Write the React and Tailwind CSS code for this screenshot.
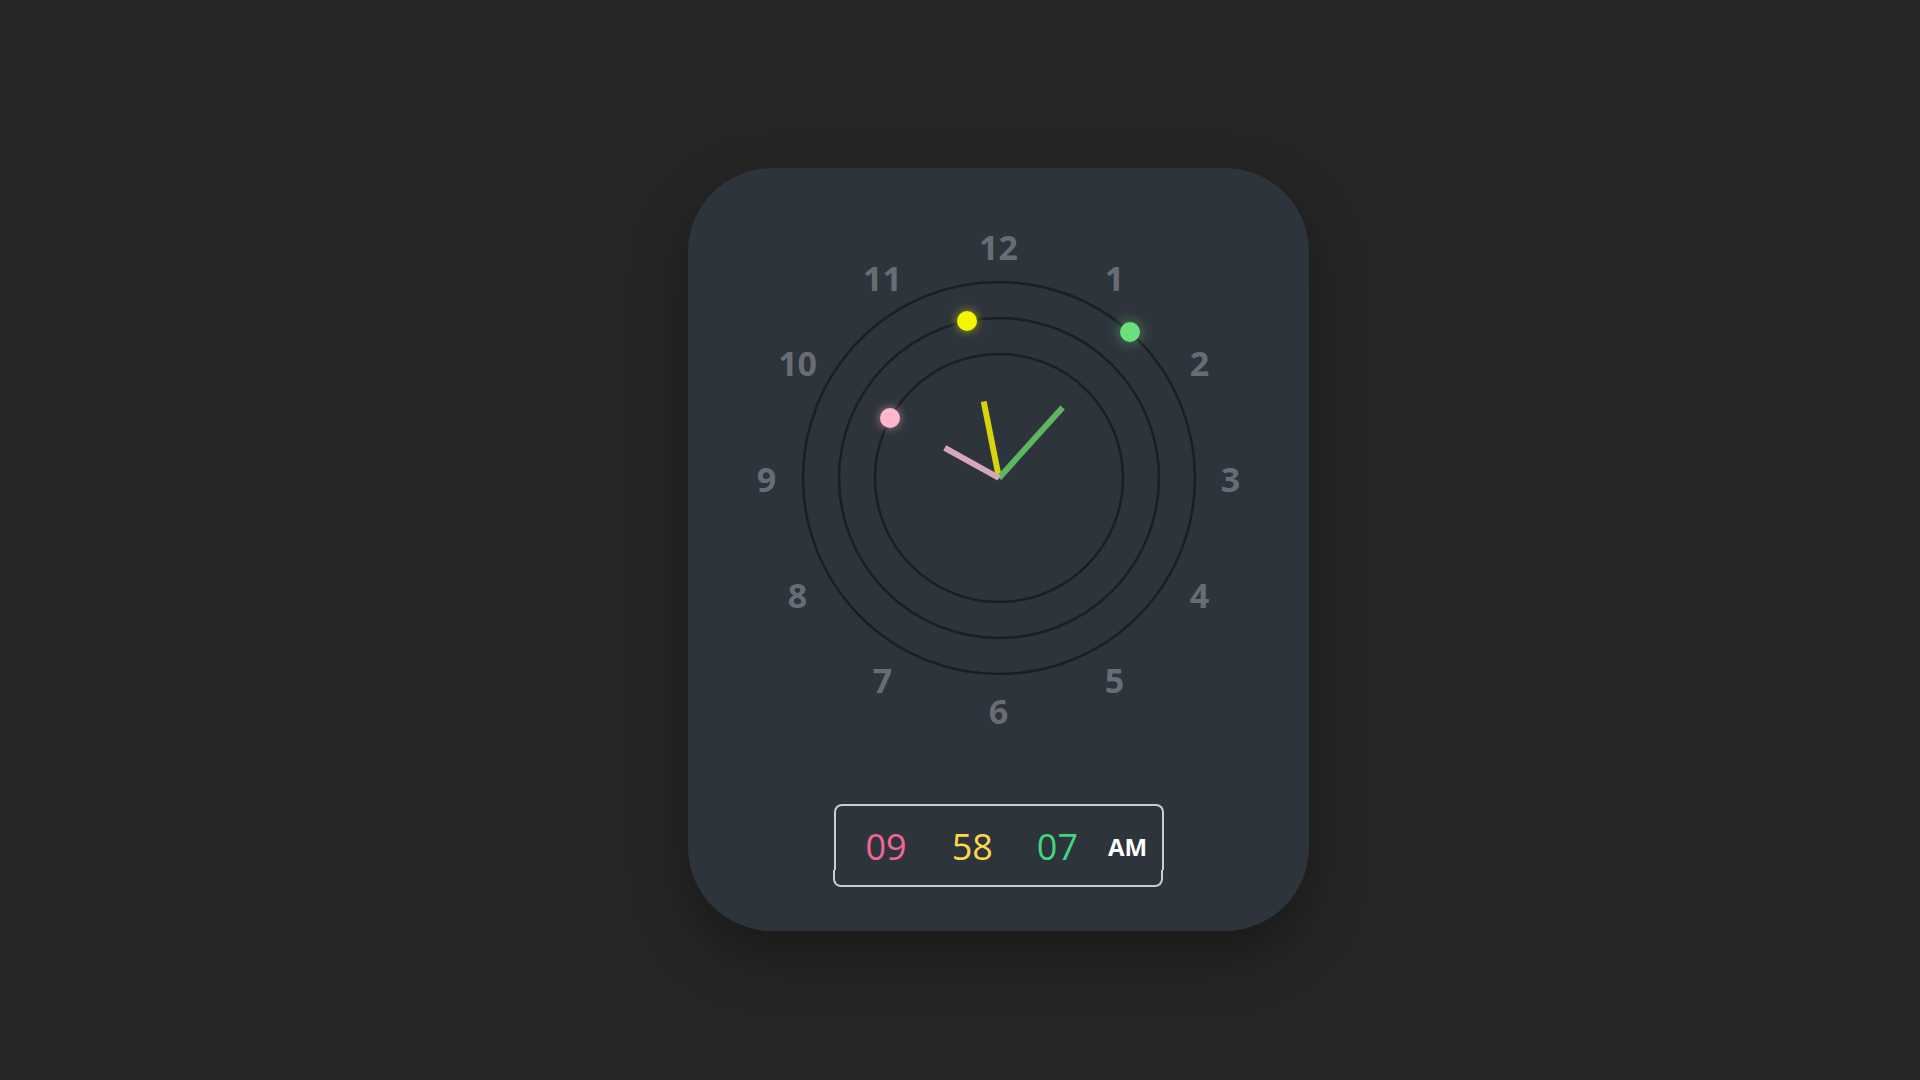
import React from 'react';

const font = { fontFamily: '"Open Sans", "Noto Sans", sans-serif' };

// dial numbers, placed round the centre at radius 232
const numbers = [12, 1, 2, 3, 4, 5, 6, 7, 8, 9, 10, 11];

const polar = (deg, r) => {
  const a = (deg * Math.PI) / 180;
  return { x: 250 + r * Math.sin(a), y: 250 - r * Math.cos(a) };
};

const time = { h: 9, m: 58, s: 7 };

const ClockFace = () => {
  const hourDeg = (time.h % 12) * 30 + time.m * 0.5;
  const minDeg = time.m * 6 + time.s * 0.1;
  const secDeg = time.s * 6;

  const hourEnd = polar(hourDeg, 62);
  const minEnd = polar(minDeg, 78);
  const secEnd = polar(secDeg, 95);

  const hourDot = polar(hourDeg, 124);
  const minDot = polar(minDeg, 160);
  const secDot = polar(secDeg, 196);

  return (
    <div className="relative w-[500px] h-[500px]">
      <svg width="500" height="500" viewBox="0 0 500 500" className="absolute inset-0">
        <circle cx="250" cy="250" r="196" fill="none" stroke="#1b1f25" strokeWidth="2.5" />
        <circle cx="250" cy="250" r="160" fill="none" stroke="#1b1f25" strokeWidth="2.5" />
        <circle cx="250" cy="250" r="124" fill="none" stroke="#1b1f25" strokeWidth="2.5" />
        <line x1="250" y1="250" x2={minEnd.x} y2={minEnd.y} stroke="#d6d50d" strokeWidth="6" />
        <line x1="250" y1="250" x2={secEnd.x} y2={secEnd.y} stroke="#5cb85f" strokeWidth="6" />
        <line x1="250" y1="250" x2={hourEnd.x} y2={hourEnd.y} stroke="#d8a7bd" strokeWidth="6" />
      </svg>

      {numbers.map((n, i) => {
        const p = polar(i * 30, 232);
        return (
          <span
            key={n}
            className="absolute -translate-x-1/2 -translate-y-1/2 text-[34px] font-bold leading-none text-[#686d75]"
            style={{ left: p.x, top: p.y + 1 }}
          >
            {n}
          </span>
        );
      })}

      <div
        className="absolute w-5 h-5 -ml-2.5 -mt-2.5 rounded-full bg-[#ffb7c9] shadow-[0_0_10px_rgba(255,183,201,0.6)]"
        style={{ left: hourDot.x, top: hourDot.y }}
      />
      <div
        className="absolute w-5 h-5 -ml-2.5 -mt-2.5 rounded-full bg-[#f5f500] shadow-[0_0_10px_rgba(245,245,0,0.6)]"
        style={{ left: minDot.x, top: minDot.y }}
      />
      <div
        className="absolute w-5 h-5 -ml-2.5 -mt-2.5 rounded-full bg-[#6bdf7b] shadow-[0_0_14px_rgba(107,223,123,0.55)]"
        style={{ left: secDot.x, top: secDot.y }}
      />
    </div>
  );
};

const pad = (n) => String(n).padStart(2, '0');

const DigitalDisplay = () => (
  <div className="flex flex-col w-[330px]">
    <div className="h-[66px] border-2 border-b-0 border-[#c9ccd3] rounded-t-[8px] flex items-center pl-[30px] pt-[18px]">
      <span className="text-[36px] leading-none text-[#f06795]">{pad(time.h)}</span>
      <span className="ml-[45px] text-[36px] leading-none text-[#fcd84a]">{pad(time.m)}</span>
      <span className="ml-[44px] text-[36px] leading-none text-[#3fd67e]">{pad(time.s)}</span>
      <span className="ml-[30px] text-[24px] font-bold leading-none text-white">AM</span>
    </div>
    <div className="h-[17px] -ml-[1px] w-[330px] border-2 border-t-0 border-[#c9ccd3] rounded-b-[8px]" />
  </div>
);

export default function App() {
  return (
    <div className="min-h-screen w-full bg-[#262626] pl-[688px] pt-[168px]" style={font}>
      <div className="w-[621px] h-[763px] rounded-[84px] bg-[#2e343c] shadow-[0_24px_60px_rgba(0,0,0,0.35)] flex flex-col items-center pt-[60px]">
        <ClockFace />
        <div className="mt-[76px]">
          <DigitalDisplay />
        </div>
      </div>
    </div>
  );
}
